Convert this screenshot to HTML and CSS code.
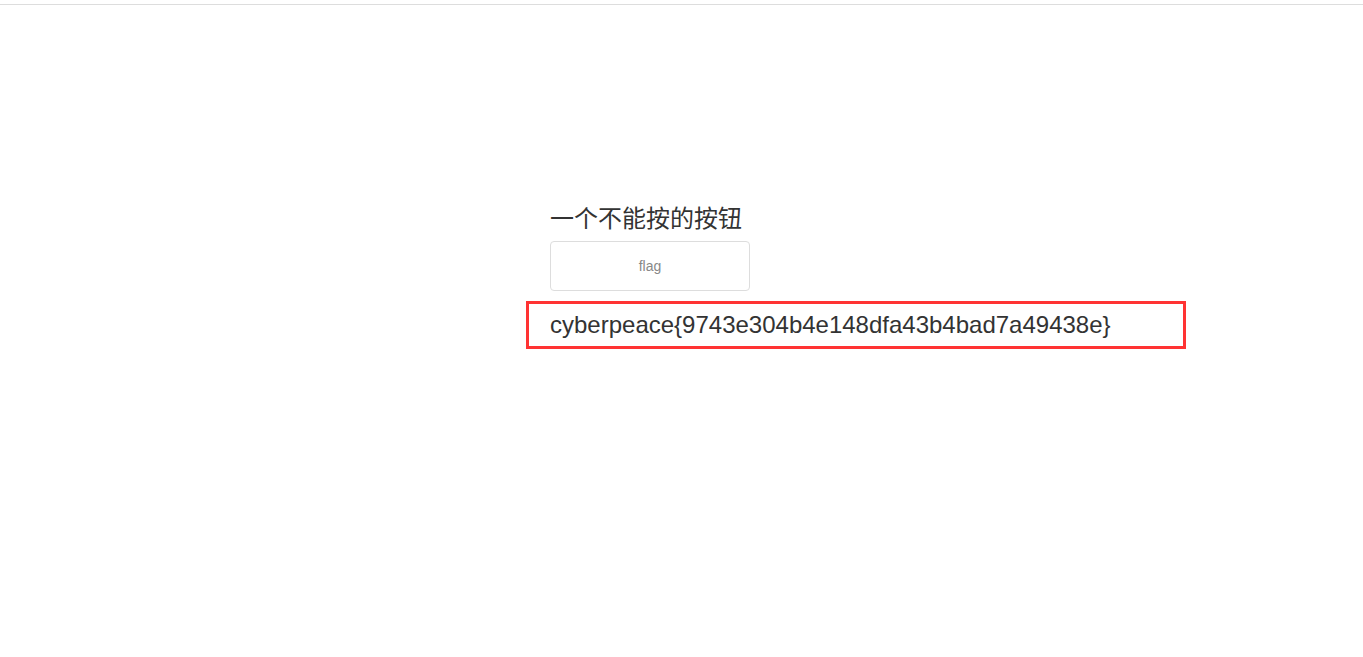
FILE: index.html
```html
<!DOCTYPE html>
<html>
<head>
  <meta charset="utf-8">
  <title>一个不能按的按钮</title>
  <link rel="stylesheet" href="styles.css">
</head>
<body>
  <div class="topline"></div>
  <div class="container">
    <h3>一个不能按的按钮</h3>
    <form>
      <input class="btn" type="button" value="flag">
    </form>
    <div class="flag">cyberpeace{9743e304b4e148dfa43b4bad7a49438e}</div>
  </div>
</body>
</html>
```

FILE: styles.css
```css
body {
  margin: 0;
  font-family: "Liberation Sans", Arial, "Noto Sans CJK SC", sans-serif;
  color: #333333;
  background-color: #ffffff;
}

.topline {
  height: 1px;
  margin-top: 4px;
  background-color: #dddddd;
}

.container {
  margin-left: 550px;
  padding-top: 199px;
}

h3 {
  margin: 0 0 11px 0;
  font-size: 24px;
  font-weight: normal;
  line-height: 26px;
  font-family: "Noto Sans CJK SC", sans-serif;
}

.btn {
  display: block;
  width: 200px;
  height: 50px;
  padding: 0;
  border: 1px solid #dddddd;
  border-radius: 4px;
  background-color: #ffffff;
  color: #888888;
  font-family: "Liberation Sans", Arial, sans-serif;
  font-size: 14px;
}

.flag {
  width: 633px;
  margin-top: 10px;
  margin-left: -24px;
  padding: 6px 0 6px 21px;
  border: 3px solid #ff3333;
  font-size: 24px;
  line-height: 30px;
}
```
